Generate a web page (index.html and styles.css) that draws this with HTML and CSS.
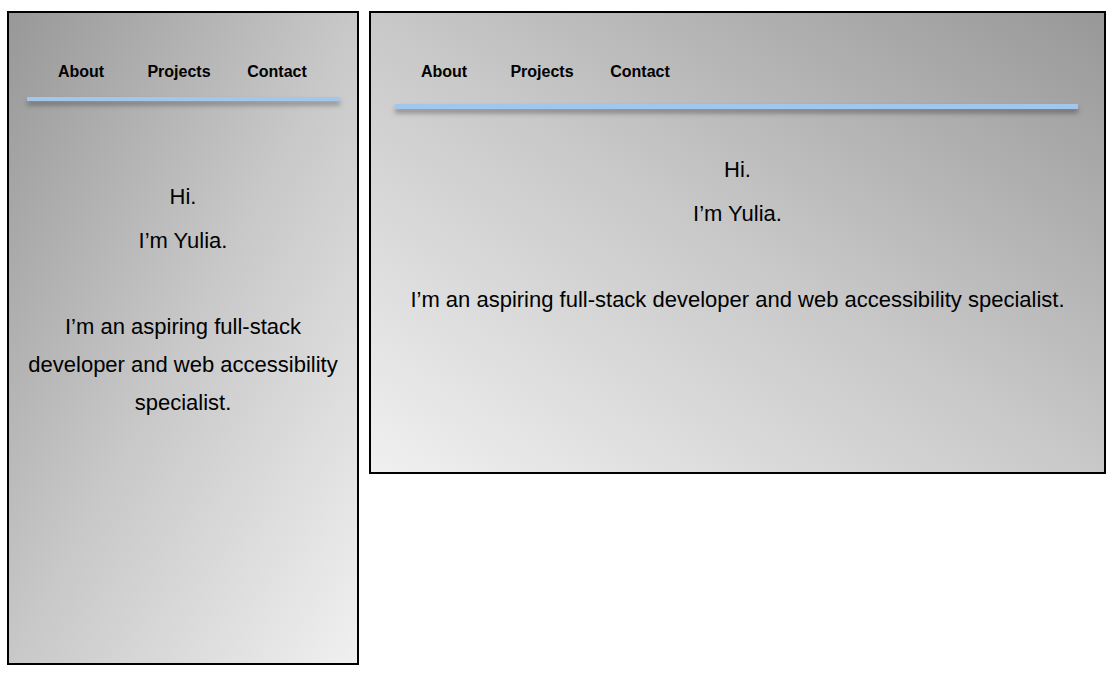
FILE: index.html
```html
<!DOCTYPE html>
<html lang="en">
<head>
<meta charset="utf-8">
<title>Yulia</title>
<link rel="stylesheet" href="styles.css">
</head>
<body>
<div class="board">
  <section class="frame frame--mobile">
    <nav class="nav">
      <a class="nav-link" href="#">About</a>
      <a class="nav-link" href="#">Projects</a>
      <a class="nav-link" href="#">Contact</a>
    </nav>
    <div class="rule"></div>
    <div class="hero">
      <p class="greet">Hi.</p>
      <p class="greet">I’m Yulia.</p>
      <p class="bio">I’m an aspiring full-stack developer and web accessibility specialist.</p>
    </div>
  </section>
  <section class="frame frame--desktop">
    <nav class="nav">
      <a class="nav-link" href="#">About</a>
      <a class="nav-link" href="#">Projects</a>
      <a class="nav-link" href="#">Contact</a>
    </nav>
    <div class="rule"></div>
    <div class="hero">
      <p class="greet">Hi.</p>
      <p class="greet">I’m Yulia.</p>
      <p class="bio">I’m an aspiring full-stack developer and web accessibility specialist.</p>
    </div>
  </section>
</div>
</body>
</html>
```
FILE: styles.css
```css
html, body {
  margin: 0;
  padding: 0;
  background: #ffffff;
}

body {
  font-family: "Liberation Sans", Arial, sans-serif;
  color: #000000;
}

.board {
  display: flex;
  align-items: flex-start;
  gap: 10px;
  padding: 11px 0 0 7px;
}

.frame {
  box-sizing: border-box;
  border: 2px solid #000000;
  display: flex;
  flex-direction: column;
}

.frame--mobile {
  width: 352px;
  height: 654px;
  background: linear-gradient(to bottom right, #989898 0%, #c8c8c8 50%, #f0f0f0 100%);
}

.frame--desktop {
  width: 737px;
  height: 463px;
  background: linear-gradient(to bottom left, #989898 0%, #c8c8c8 50%, #f0f0f0 100%);
}

.nav {
  display: flex;
  padding: 50px 0 0 23px;
}

.frame--desktop .nav {
  padding-left: 24px;
}

.nav-link {
  width: 98px;
  text-align: center;
  font-size: 16px;
  font-weight: bold;
  line-height: 18px;
  color: #000000;
  text-decoration: none;
}

.rule {
  background: #a3c7ec;
  box-shadow: 0 4px 5px rgba(0, 0, 0, 0.35);
}

.frame--mobile .rule {
  height: 4px;
  margin: 16px 17px 0 18px;
}

.frame--desktop .rule {
  height: 5px;
  margin: 23px 26px 0 24px;
}

.hero {
  text-align: center;
  font-size: 22px;
}

.frame--mobile .hero {
  margin-top: 74px;
  padding: 0 16px;
}

.frame--desktop .hero {
  margin-top: 39px;
}

.greet {
  margin: 0;
  line-height: 44px;
}

.bio {
  margin: 45px 0 0;
  line-height: 38px;
}
```
